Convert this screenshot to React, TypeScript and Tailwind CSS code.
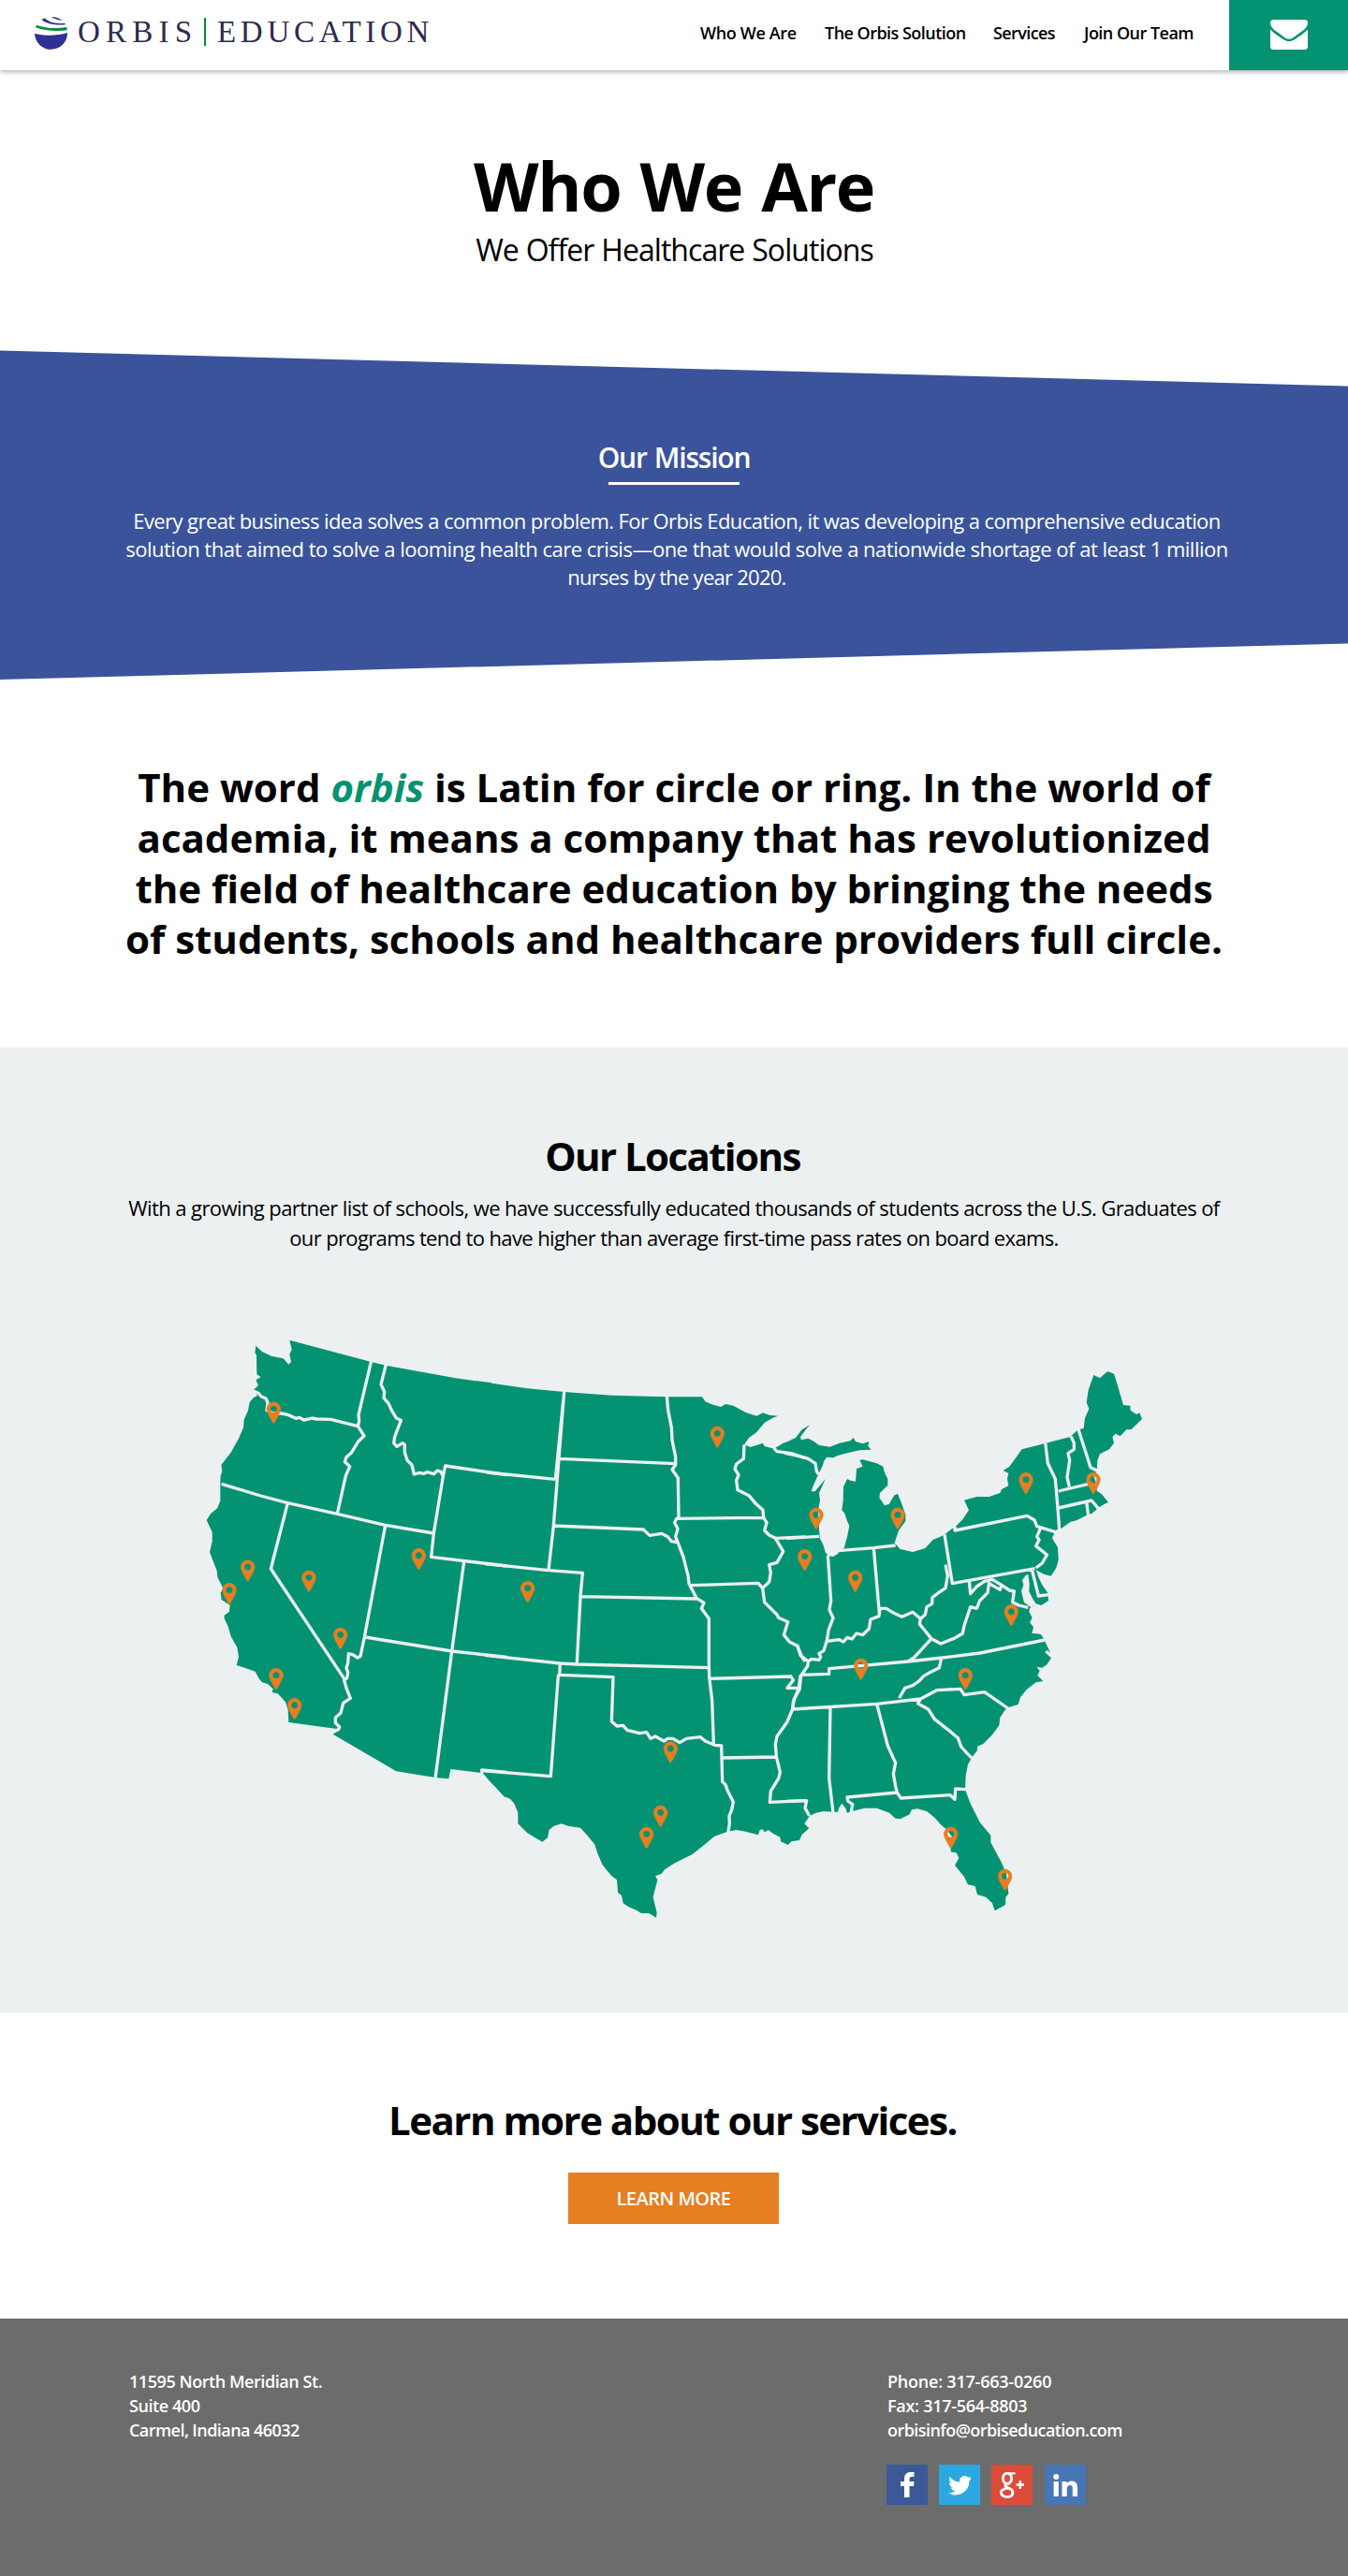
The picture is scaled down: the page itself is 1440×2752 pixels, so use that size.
import React from "react";

const GREEN = "#049372";
const LINE = "#ecf0f1";

/* Map tiles: each holds its own origin, land shape and border lines. */
type Tile = { x: number; y: number; land: string; lines: string; pins: [number, number][] };

const tiles: Tile[] = [
  {
    x: 0,
    y: 0,
    land:
      "M328 65 L590 135 L637 146 L860 187 L975 202 L975 1446 L944 1442 L942 1452 L844 1440 L838 1471 L795 1467 L670 1447 L467 1328 L487 1315 L480 1311 L325 1290 L323 1250 L315 1225 L290 1198 L272 1194 L275 1183 L258 1167 L240 1162 L230 1150 L218 1127 L197 1120 L175 1112 L158 1107 L165 1080 L160 1050 L140 1015 L130 980 L120 960 L118 948 L135 935 L137 915 L110 897 L107 875 L115 860 L97 825 L95 805 L72 745 L80 710 L80 680 L62 642 L75 622 L97 603 L106 580 L106 520 L107 500 L112 485 L109 465 L140 425 L165 380 L180 345 L182 320 L195 290 L200 265 L212 250 L225 243 L212 225 L228 210 L220 193 L236 183 L223 175 L222 115 L217 105 L220 83 L240 102 L270 116 L308 124 L325 143 L333 135 L328 110 L335 95Z",
    lines:
      "M212 228 L228 235 L238 246 L252 252 L258 265 L255 290 L277 300 L303 300 L325 305 L348 316 L360 313 L373 321 L390 318 L400 315 L415 318 L460 319 L547 341 M590 131 L549 305 L551 325 L547 341 L567 372 L548 390 L527 425 L510 440 L505 455 L521 470 L508 500 L481 621 M637 143 L621 207 L632 230 L630 250 L645 268 L655 290 L670 315 L685 322 L665 375 L662 395 L672 406 L690 395 L697 400 L697 425 L705 450 L720 465 L727 495 L745 490 L757 493 L770 488 L790 494 L802 483 L813 487 L820 502 M1025 497 L827 468 L820 502 L790 684 L782 760 L1025 789 M110 526 L235 564 L322 587 L481 622 L635 658 L790 684 M322 587 L268 798 L503 1150 M635 658 L568 1017 L555 1078 L546 1083 L530 1073 L517 1070 L515 1100 L510 1115 L515 1130 L512 1148 L503 1155 L510 1180 L523 1213 L500 1228 L492 1260 L475 1275 L475 1292 L488 1305 L485 1313 L467 1320 M570 1017 L848 1062 L1025 1081 M887 775 L848 1062 L795 1470 M945 1452 L944 1443 L1025 1450",
    pins: [[277, 264], [194, 770], [135, 844], [390, 804], [742, 733], [491, 987], [285, 1117], [344, 1213]],
  },
  {
    x: 960,
    y: 150,
    land:
      "M-5 50 L130 70 L248 81 L400 92 L575 97 L690 97 L700 112 L725 122 L750 129 L765 120 L790 125 L830 147 L865 158 L885 148 L905 155 L933 158 L915 165 L890 180 L865 210 L840 228 L825 250 L845 258 L885 245 L890 255 L920 263 L950 245 L967 240 L970 905 L-5 905Z",
    lines:
      "M248 81 L220 360 M0 339 L220 361 M248 81 L231 295 L214 510 L198 652 M231 295 L605 311 M214 510 L502 522 L522 541 L560 535 L580 545 L592 560 L610 563 M-5 632 L198 653 L307 661 L300 737 L289 950 M303 737 L672 744 M577 94 L581 140 L592 195 L594 235 L605 290 L605 315 L594 330 L613 357 L615 487 M885 484 L608 487 L602 500 L612 520 L605 545 L612 563 L630 610 L645 670 L648 695 L672 742 L696 757 L688 775 L712 808 L712 965 M653 701 L870 694 L884 710 M825 250 L823 295 L800 312 L795 328 L807 347 L800 365 L804 395 L840 413 L860 437 L885 460 L887 484 L897 500 L890 525 L905 540 L925 550 L950 592 L930 628 L905 635 L910 660 L905 690 L884 710 L890 755 L930 795 L935 805 L965 818 L952 860 L970 882 L995 895 L1010 930 L1020 945 M925 550 L1020 546 M920 261 L930 272 L975 278 L1020 293",
    pins: [[739, 192], [131, 688]],
  },
  {
    x: 960,
    y: 990,
    land:
      "M-15 460 L-5 472 L10 490 L30 510 L55 538 L75 545 L88 560 L100 590 L100 625 L130 655 L178 683 L195 670 L200 645 L215 632 L240 625 L260 632 L300 638 L320 660 L345 690 L355 720 L370 755 L385 775 L400 792 L417 805 L420 845 L432 855 L437 880 L455 892 L480 902 L495 912 L520 912 L543 926 L545 910 L533 860 L547 805 L540 793 L560 785 L570 772 L600 752 L660 722 L700 690 L730 665 L772 650 L800 645 L830 650 L870 661 L875 645 L885 643 L890 652 L903 645 L915 655 L940 668 L942 682 L965 692 L980 678 L980 -5 L-15 -5Z",
    lines:
      "M-5 85 L235 111 L289 114 L712 125 M235 111 L233 148 L405 155 L400 297 L417 312 L437 310 L450 325 L490 335 L512 332 L525 352 L540 345 L555 353 L568 360 L580 352 L597 352 L618 365 L640 352 L685 347 L700 360 L730 373 L752 375 L755 490 L765 500 L772 520 L790 555 L785 580 L777 600 L778 625 L773 655 M233 148 L229 150 L205 473 L-15 455 M712 120 L713 155 L722 230 L727 370 M713 160 L975 153 L982 165 L963 190 L997 190 M755 414 L925 411 M1005 150 L1000 190 L982 235 L980 258 L962 300 L930 345 L925 370 L928 410 L940 460 L935 480 L910 520 L907 556 L1025 551",
    pins: [[589, 362], [557, 567], [512, 636]],
  },
  {
    x: 1920,
    y: 270,
    land:
      "M-5 125 L0 122 L30 108 L50 82 L75 67 L60 85 L45 105 L48 115 L70 110 L85 118 L105 132 L140 137 L170 125 L205 118 L215 108 L222 120 L245 127 L265 120 L262 135 L272 146 L235 148 L195 157 L165 165 L150 172 L130 170 L122 180 L115 200 L103 224 L85 265 L80 280 L92 280 L125 240 L105 285 L108 310 L102 340 L105 400 L107 430 L118 450 L125 475 L135 487 L150 489 L165 480 L170 470 L185 462 L195 425 L202 390 L195 375 L187 350 L178 340 L182 310 L183 265 L195 240 L205 245 L222 248 L225 207 L245 200 L235 180 L245 178 L290 190 L310 200 L315 220 L325 240 L325 260 L300 285 L298 300 L315 325 L330 320 L345 293 L357 287 L370 320 L382 355 L382 375 L360 405 L347 445 L365 465 L405 474 L445 462 L470 435 L505 420 L530 400 L540 395 L565 370 L585 340 L570 308 L610 297 L650 297 L685 285 L690 273 L712 262 L708 240 L712 222 L695 213 L715 200 L755 145 L830 126 L850 260 L865 400 L852 430 L870 460 L872 500 L865 525 L848 551 L825 545 L800 532 L808 555 L820 580 L838 605 L840 630 L817 645 L800 640 L780 655 L778 665 L788 685 L780 700 L792 715 L787 735 L815 738 L825 752 L828 765 L-5 765Z",
    lines:
      "M-5 157 L35 165 L70 175 L93 190 L97 215 L103 225 M0 430 L105 424 M133 485 L143 630 L138 660 L150 685 L135 725 L130 760 L170 755 L183 762 L195 748 L210 753 L225 735 L245 740 L265 720 L270 690 L297 680 L300 655 L320 655 L345 670 L370 682 L405 667 L430 688 L445 675 L450 650 L467 640 L468 620 L490 603 L510 590 L517 550 L510 515 M165 470 L280 461 L350 453 M280 461 L298 670 M507 418 L532 575 L797 527 M540 393 L540 405 L772 358 L795 372 L803 392 L870 412 M815 397 L803 425 L810 435 L800 455 L835 483 L820 510 L800 525 M430 688 L427 705 L465 752 L495 768 L540 750 L565 735 L570 710 L590 650 L610 655 L620 630 L645 605 L650 570 M586 567 L590 608 L610 585 L635 568 L660 562 L690 580 L715 597 L730 600 L725 635 L745 645 L775 652 M650 575 L685 595 L690 580 M787 530 L808 615 L840 611 M465 752 L410 812 L390 825",
    pins: [[96, 333], [357, 333], [59, 466], [221, 534], [768, 220], [721, 643]],
  },
  {
    x: 1920,
    y: 990,
    land:
      "M0 -5 L785 5 L785 15 L815 18 L825 32 L845 75 L848 95 L835 115 L820 125 L802 122 L812 135 L805 150 L823 168 L800 172 L770 195 L750 220 L743 243 L712 252 L700 262 L685 285 L682 310 L660 340 L630 370 L612 377 L612 390 L595 412 L582 435 L575 470 L573 515 L590 560 L620 620 L655 662 L655 685 L690 750 L705 785 L712 850 L703 860 L702 885 L668 904 L660 880 L640 860 L612 852 L605 825 L582 820 L570 795 L540 758 L553 735 L545 718 L527 715 L527 700 L532 668 L515 645 L495 628 L475 605 L450 585 L420 577 L402 580 L395 595 L365 610 L350 608 L330 590 L290 575 L250 575 L212 585 L195 590 L190 575 L178 560 L168 575 L165 587 L150 587 L120 585 L95 590 L75 600 L58 625 L73 640 L50 660 L42 678 L15 682 L5 692 L0 690Z",
    lines:
      "M35 52 L45 85 L70 105 L68 120 L47 150 L42 195 L25 225 L20 258 M70 105 L80 97 L105 100 L110 90 L105 80 L120 70 L130 38 M20 258 L290 241 L430 225 L482 197 L558 193 L570 212 L635 203 L710 255 M0 553 L65 551 L60 575 L74 600 M47 148 L137 145 L137 128 L390 105 L500 93 L620 78 L828 36 M497 93 L490 125 L460 140 L440 152 L425 168 L405 182 L380 190 L362 222 M430 225 L422 240 L455 258 L475 290 L520 325 L550 350 L560 378 L580 400 L595 415 M141 250 L137 480 L150 590 M290 241 L325 375 L350 430 L343 465 L350 505 L355 525 L367 543 L525 533 L540 547 L542 513 L575 515 M355 525 L195 540 L197 552 L212 563 L208 588 M832 72 L850 88",
    pins: [[239, 96], [574, 127], [527, 636], [701, 771]],
  },
  {
    x: 2580,
    y: 90,
    land:
      "M325 87 L345 97 L358 85 L370 75 L390 83 L400 115 L420 183 L442 185 L443 200 L462 213 L472 208 L480 228 L465 242 L445 262 L430 262 L410 283 L395 275 L385 285 L390 305 L375 325 L345 340 L337 360 L335 395 L325 410 L335 440 L335 458 L350 468 L372 495 L360 500 L340 512 L320 530 L300 538 L270 553 L250 558 L222 578 L200 585 L160 400 L160 308 L250 285 L275 262 L293 258 L297 225 L310 195 L302 175 L308 135Z",
    lines:
      "M170 304 L178 370 L202 420 L210 515 L216 595 M252 283 L262 305 L262 325 L243 338 L248 360 L240 415 L247 445 M275 258 L315 383 L337 394 M212 459 L318 434 M212 513 L318 489 L345 520 M302 493 L308 540",
    pins: [[324, 400]],
  },
];

const Pin = ({ x, y }: { x: number; y: number }) => (
  <path
    transform={`translate(${x} ${y})`}
    fill="#e67e22"
    stroke="#e67e22"
    strokeWidth={1.5}
    fillRule="evenodd"
    d="M0 0C-12 0-22 10-22 22C-22 34-10 50-3 65Q0 69 3 65C10 50 22 34 22 22C22 10 12 0 0 0ZM0 11a11 11 0 1 1 0 22a11 11 0 1 1 0-22Z"
  />
);

const UsMap = () => (
  <svg viewBox="0 0 3120 1980" className="block h-[660px] w-[1040px]">
    {tiles.map((t, i) => (
      <path key={i} transform={`translate(${t.x} ${t.y})`} d={t.land} fill={GREEN} />
    ))}
    <path
      transform="translate(1920 270)"
      fill={LINE}
      d="M775 546 L779 575 L778 600 L788 622 L800 640 L785 652 L762 636 L753 600 L760 580 L756 565 L766 550Z"
    />
    {tiles.map((t, i) => (
      <path
        key={i}
        transform={`translate(${t.x} ${t.y})`}
        d={t.lines}
        fill="none"
        stroke={LINE}
        strokeWidth={10}
        strokeLinejoin="round"
      />
    ))}
    {tiles.map((t) => t.pins.map(([x, y]) => <Pin key={`${t.x + x}-${t.y + y}`} x={t.x + x} y={t.y + y} />))}
  </svg>
);

const Globe = () => (
  <svg viewBox="0 0 105 105" className="mt-[18px] h-[35px] w-[35px]">
    <path fill="#2e3192" d="M0 53C35 62 70 61 105 51A52.500 52.500 0 1 1 0 53Z" />
    <path fill="#068a3a" d="M6 26C35 37 70 39 103 33L104 43C70 48 33 45 3 34Z" />
    <path fill="#2e3192" d="M22 9L32 4C44 17 66 24 96 20L99 25C66 28 38 22 22 9Z" />
    <path fill="#2e3192" d="M53 0C62 6 76 11 88 12C80 4 66 0 53 0Z" />
  </svg>
);

const Header = () => (
  <header className="relative z-10 flex h-[75px] bg-white shadow-[0_2px_5px_rgba(0,0,0,0.3)]">
    <div className="flex w-[748px] pl-[37px]">
      <Globe />
      <div className="ml-[11px] mt-[14px] flex font-['Liberation_Serif',serif] text-[33px] leading-[40px] text-[#2b2c4e]">
        <span className="w-[135px] tracking-[6.200px]">ORBIS</span>
        <span className="mt-[5px] h-[30px] w-[2px] bg-[#068a3a]" />
        <span className="ml-[12px] tracking-[4.700px]">EDUCATION</span>
      </div>
    </div>
    <nav className="flex w-[565px] whitespace-nowrap pt-[21px] text-[18px] leading-[28px] font-semibold text-black">
      <a className="w-[133px] tracking-[-0.350px]">Who We Are</a>
      <a className="w-[180px] tracking-[-0.530px]">The Orbis Solution</a>
      <a className="w-[97px] tracking-[-0.600px]">Services</a>
      <a className="tracking-[-0.520px]">Join Our Team</a>
    </nav>
    <div className="flex flex-1 justify-center bg-[#049372] pt-[21px]">
      <svg viewBox="0 0 40 32" className="h-[32px] w-[40px]" fill="#fff">
        <path d="M0 3.500Q0 0 3.500 0H36.500Q40 0 40 3.500C40 7 37.500 9.500 35 11.500L24 19.500Q20 22 16 19.500L5 11.500C2.500 9.500 0 7 0 3.500Z" />
        <path d="M0 10.500C4 15 9 17.500 14.500 21.500Q20 25 25.500 21.500C31 17.500 36 15 40 10.500V28.500Q40 32 36.500 32H3.500Q0 32 0 28.500Z" />
      </svg>
    </div>
  </header>
);

const Social = () => (
  <div className="mt-[24px] flex">
    <span className="-ml-px flex h-[43px] w-[44px] items-center justify-center bg-[#3b5998]">
      <svg viewBox="0 0 15 27" className="h-[27px] w-[15px]" fill="#fff">
        <path d="M4 27V15H0V10H4V7.500C4 2.500 6.500 0 11 0H14.500V5H12C10 5 9.500 5.800 9.500 7.500V10H14.500L14 15H9.500V27Z" />
      </svg>
    </span>
    <span className="ml-[12px] flex h-[43px] w-[44px] items-center justify-center bg-[#2ca7e0]">
      <svg viewBox="0 0 24 20" className="mt-[2px] h-[21px] w-[25px]" fill="#fff">
        <path d="M24 2.300a9.800 9.800 0 0 1-2.800.8A4.900 4.900 0 0 0 23.300.4a9.800 9.800 0 0 1-3.100 1.200 4.900 4.900 0 0 0-8.400 4.500A14 14 0 0 1 1.700.9a4.900 4.900 0 0 0 1.500 6.600A4.900 4.900 0 0 1 1 6.900a4.900 4.900 0 0 0 3.900 4.900 4.900 4.900 0 0 1-2.200.1 4.900 4.900 0 0 0 4.600 3.400A9.900 9.900 0 0 1 0 17.300a14 14 0 0 0 21.500-12.400A10 10 0 0 0 24 2.300Z" />
      </svg>
    </span>
    <span className="ml-[12px] flex h-[43px] w-[44px] items-center justify-center bg-[#dd4b39]">
      <svg viewBox="0 0 26 28" className="h-[28px] w-[26px]" fill="none" stroke="#fff">
        <ellipse cx="8" cy="6.800" rx="4.600" ry="5.600" strokeWidth="3" />
        <path d="M9 1.400H16.500" strokeWidth="2.200" />
        <path d="M7 12.500C4.500 14.500 6.500 15.800 10 17.200C15.500 19.500 15.500 26.400 8 26.400C1 26.400-.5 20.500 4 18.500C5.500 17.600 7.500 17.300 9.500 17.200" strokeWidth="2.800" />
        <path d="M17.500 13.500H26M21.800 9.200V17.800" strokeWidth="2.600" />
      </svg>
    </span>
    <span className="ml-[13px] flex h-[43px] w-[44px] items-center justify-center bg-[#4875b4]">
      <svg viewBox="0 0 26 24" className="mt-px h-[24px] w-[26px]" fill="#fff">
        <circle cx="3.200" cy="3" r="3" />
        <path d="M.6 8H5.800V24H.6ZM9.500 8H14.500V10.200C15.700 8.400 17.600 7.600 19.800 7.600C24.500 7.600 26 10.500 26 15V24H20.800V16C20.800 13.500 20.300 12 18.200 12C15.700 12 14.700 13.800 14.700 16V24H9.500Z" />
      </svg>
    </span>
  </div>
);

export default function App() {
  return (
    <div className="h-[2752px] w-[1440px] overflow-hidden bg-white font-['Open_Sans',sans-serif] text-black">
      <Header />

      <section className="h-[299px] whitespace-nowrap pt-[83px] text-center">
        <h1 className="text-[72px] leading-[80px] font-bold tracking-[-1.400px] [word-spacing:3px]">Who We Are</h1>
        <p className="mt-[9px] pl-px text-[32px] leading-[40px] tracking-[-0.950px] [word-spacing:0.500px]">
          We Offer Healthcare Solutions
        </p>
      </section>

      <section className="h-[352px] bg-[#3a539b] pt-[95px] text-center whitespace-nowrap text-white [clip-path:polygon(0_0.500px,100%_38.500px,100%_313.500px,0_100%)]">
        <h2 className="text-[30px] leading-[40px] font-semibold tracking-[-1.200px] [word-spacing:1.500px]">
          Our Mission
        </h2>
        <div className="mx-auto mt-[6px] h-[3px] w-[140px] bg-white" />
        <p className="mt-[23px] pl-[6px] text-[22px] leading-[30px]">
          <span className="block tracking-[-0.580px]">
            Every great business idea solves a common problem. For Orbis Education, it was developing a comprehensive
            education
          </span>
          <span className="block tracking-[-0.500px]">
            solution that aimed to solve a looming health care crisis—one that would solve a nationwide shortage of at
            least 1 million
          </span>
          <span className="block tracking-[-0.740px]">nurses by the year 2020.</span>
        </p>
      </section>

      <section className="h-[393px] pt-[88px] text-center text-[42px] leading-[54px] font-bold whitespace-nowrap">
        <p>
          <span className="block">
            The word <em className="text-[#049372]">orbis</em> is Latin for circle or ring. In the world of
          </span>
          <span className="block">academia, it means a company that has revolutionized</span>
          <span className="block">the field of healthcare education by bringing the needs</span>
          <span className="block">of students, schools and healthcare providers full circle.</span>
        </p>
      </section>

      <section className="h-[1031px] bg-[#ecf0f1] pt-[88px] text-center whitespace-nowrap">
        <h2 className="pr-[3px] text-[42px] leading-[56px] font-bold tracking-[-1.600px]">Our Locations</h2>
        <p className="mt-[11px] text-[22px] leading-[32px]">
          <span className="block tracking-[-0.585px]">
            With a growing partner list of schools, we have successfully educated thousands of students across the U.S.
            Graduates of
          </span>
          <span className="block tracking-[-0.630px]">
            our programs tend to have higher than average first-time pass rates on board exams.
          </span>
        </p>
        <div className="mt-[72px] flex justify-center">
          <UsMap />
        </div>
      </section>

      <section className="flex h-[327px] flex-col items-center pt-[87px] whitespace-nowrap">
        <h2 className="pr-[3px] text-[42px] leading-[56px] font-bold tracking-[-1.520px]">
          Learn more about our services.
        </h2>
        <button className="mt-[28px] mr-px h-[55px] w-[225px] bg-[#e67e22] text-[20px] font-semibold tracking-[-0.500px] text-white">
          LEARN MORE
        </button>
      </section>

      <footer className="flex h-[275px] bg-[#6c6c6c] pt-[54px] pl-[138px] text-[18px] leading-[26px] font-semibold whitespace-nowrap text-white">
        <address className="w-[810px] not-italic">
          <span className="block tracking-[-0.440px]">11595 North Meridian St.</span>
          <span className="block tracking-[-0.420px]">Suite 400</span>
          <span className="block tracking-[-0.550px]">Carmel, Indiana 46032</span>
        </address>
        <div>
          <span className="block tracking-[-0.220px]">Phone: 317-663-0260</span>
          <span className="block tracking-[-0.280px]">Fax: 317-564-8803</span>
          <span className="block tracking-[-0.560px]">orbisinfo@orbiseducation.com</span>
          <Social />
        </div>
      </footer>
    </div>
  );
}
